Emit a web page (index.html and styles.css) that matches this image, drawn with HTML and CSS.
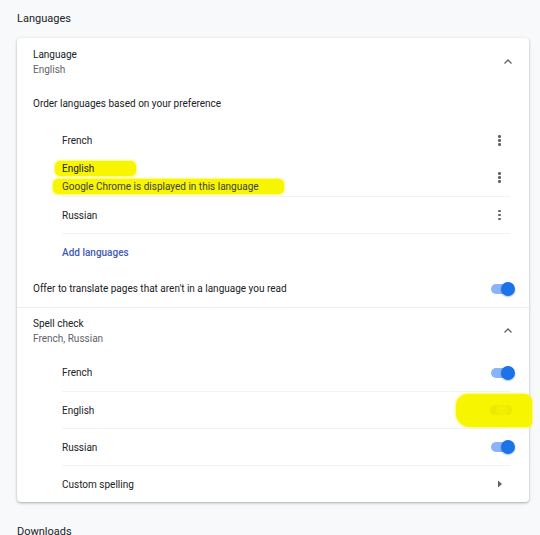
FILE: index.html
```html
<!DOCTYPE html>
<html>
<head>
<meta charset="utf-8">
<link rel="stylesheet" href="styles.css">
</head>
<body>
<div class="page">
  <div class="section-title">Languages</div>
  <div class="card">
    <div class="row two-line">
      <div class="texts">
        <div class="primary">Language</div>
        <div class="secondary">English</div>
      </div>
      <svg class="chev" width="10" height="10" viewBox="0 0 10 10"><path d="M1.5 6.5 L5 3 L8.5 6.5" fill="none" stroke="#5f6368" stroke-width="1.3"/></svg>
    </div>
    <div class="row">
      <div class="primary">Order languages based on your preference</div>
    </div>
    <div class="list">
      <div class="row sub">
        <div class="primary">French</div>
        <span class="kebab"><i></i><i></i><i></i></span>
      </div>
      <div class="row sub">
        <div class="texts hl-texts">
          <div class="primary"><span class="hl hl-en">English</span></div>
          <div class="secondary dark"><span class="hl hl-gc">Google Chrome is displayed in this language</span></div>
        </div>
        <span class="kebab"><i></i><i></i><i></i></span>
      </div>
      <div class="row sub sep">
        <div class="primary">Russian</div>
        <span class="kebab"><i></i><i></i><i></i></span>
      </div>
      <div class="row sub sep">
        <div class="link">Add languages</div>
      </div>
    </div>
    <div class="row toggle-row">
      <div class="primary">Offer to translate pages that aren't in a language you read</div>
      <span class="toggle on"><span class="knob"></span></span>
    </div>
    <div class="row two-line sep-full">
      <div class="texts">
        <div class="primary">Spell check</div>
        <div class="secondary">French, Russian</div>
      </div>
      <svg class="chev" width="10" height="10" viewBox="0 0 10 10"><path d="M1.5 6.5 L5 3 L8.5 6.5" fill="none" stroke="#5f6368" stroke-width="1.3"/></svg>
    </div>
    <div class="list">
      <div class="row sub">
        <div class="primary">French</div>
        <span class="toggle on sub-toggle"><span class="knob"></span></span>
      </div>
      <div class="row sub sep">
        <div class="primary">English</div>
        <span class="toggle-hl"><span class="toggle off"><span class="knob"></span></span></span>
      </div>
      <div class="row sub sep">
        <div class="primary">Russian</div>
        <span class="toggle on sub-toggle"><span class="knob"></span></span>
      </div>
      <div class="row sub sep">
        <div class="primary">Custom spelling</div>
        <svg class="arrow" width="6" height="8" viewBox="0 0 6 8"><path d="M1 0.5 L5 4 L1 7.5 Z" fill="#5f6368"/></svg>
      </div>
    </div>
  </div>
  <div class="section-title next">Downloads</div>
</div>
</body>
</html>
```

FILE: styles.css
```css
html, body {
  margin: 0;
  padding: 0;
  background: #f8f9fa;
  font-family: Roboto, "Liberation Sans", Arial, sans-serif;
  color: #202124;
  overflow: hidden;
}
.page {
  padding: 0 11px 0 17px;
}
.section-title {
  font-size: 11px;
  height: 38px;
  line-height: 38px;
  color: #202124;
}
.section-title.next {
  margin-top: 11px;
}
.card {
  background: #fff;
  border-radius: 4px;
  box-shadow: 0 1px 2px rgba(60,64,67,0.3), 0 1px 3px 1px rgba(60,64,67,0.1);
  padding: 0 0 0 16px;
}
.row {
  box-sizing: border-box;
  display: flex;
  align-items: center;
  justify-content: space-between;
  min-height: 37px;
  padding-right: 14px;
  font-size: 10px;
  position: relative;
}
.row.toggle-row {
  padding-right: 16px;
}
.row.two-line {
  min-height: 47px;
}
.row.sep-full {
  border-top: 1px solid #ededed;
  margin-left: -16px;
  padding-left: 16px;
}
.texts {
  display: flex;
  flex-direction: column;
  line-height: 15px;
}
.texts.hl-texts {
  line-height: 18px;
}
.primary {
  color: #202124;
}
.secondary {
  color: #5f6368;
}
.secondary.dark {
  color: #3c4043;
}
.list {
  padding-left: 29px;
  padding-right: 19px;
}
.row.sub {
  padding-right: 9px;
}
.row.sep {
  border-top: 1px solid #f3f3f3;
}
.hl {
  background: #f8f500;
  border-radius: 5px;
  padding: 2px 42px 2px 7px;
  margin-left: -7px;
  box-shadow: 0 0 2px 1px rgba(248,245,0,0.6);
}
.hl-gc {
  padding-right: 25px;
  margin-left: -9px;
  padding-left: 9px;
}
.chev {
  margin-right: 2px;
}
.kebab {
  display: flex;
  flex-direction: column;
  gap: 1.5px;
  width: 3px;
}
.kebab i {
  display: block;
  width: 2.5px;
  height: 2.5px;
  border-radius: 50%;
  background: #5f6368;
}
.toggle {
  position: relative;
  width: 22px;
  height: 10px;
  border-radius: 5px;
  background: #8ab4f8;
  margin-right: 0;
}
.toggle.sub-toggle {
  margin-right: -12px;
}
.toggle .knob {
  position: absolute;
  top: -2px;
  right: -2px;
  width: 14px;
  height: 14px;
  border-radius: 50%;
  background: #1a73e8;
  box-shadow: 0 1px 2px rgba(0,0,0,0.25);
}
.toggle.off {
  background: #ecea00;
}
.toggle.off .knob {
  background: #f2f000;
  box-shadow: none;
  right: auto;
  left: 6px;
  top: -1px;
  width: 12px;
  height: 12px;
}
.toggle-hl {
  position: absolute;
  right: -22px;
  top: 2px;
  width: 76px;
  height: 33px;
  background: #f8f500;
  border-radius: 12px 8px 5px 14px;
  box-shadow: 0 0 2px 1px rgba(248,245,0,0.6);
  display: flex;
  align-items: center;
  justify-content: flex-end;
  padding-right: 20px;
  padding-bottom: 2px;
  box-sizing: border-box;
}
.link {
  color: #3f5bb3;
  font-weight: 500;
}
.arrow {
  margin-right: -2px;
}
```
